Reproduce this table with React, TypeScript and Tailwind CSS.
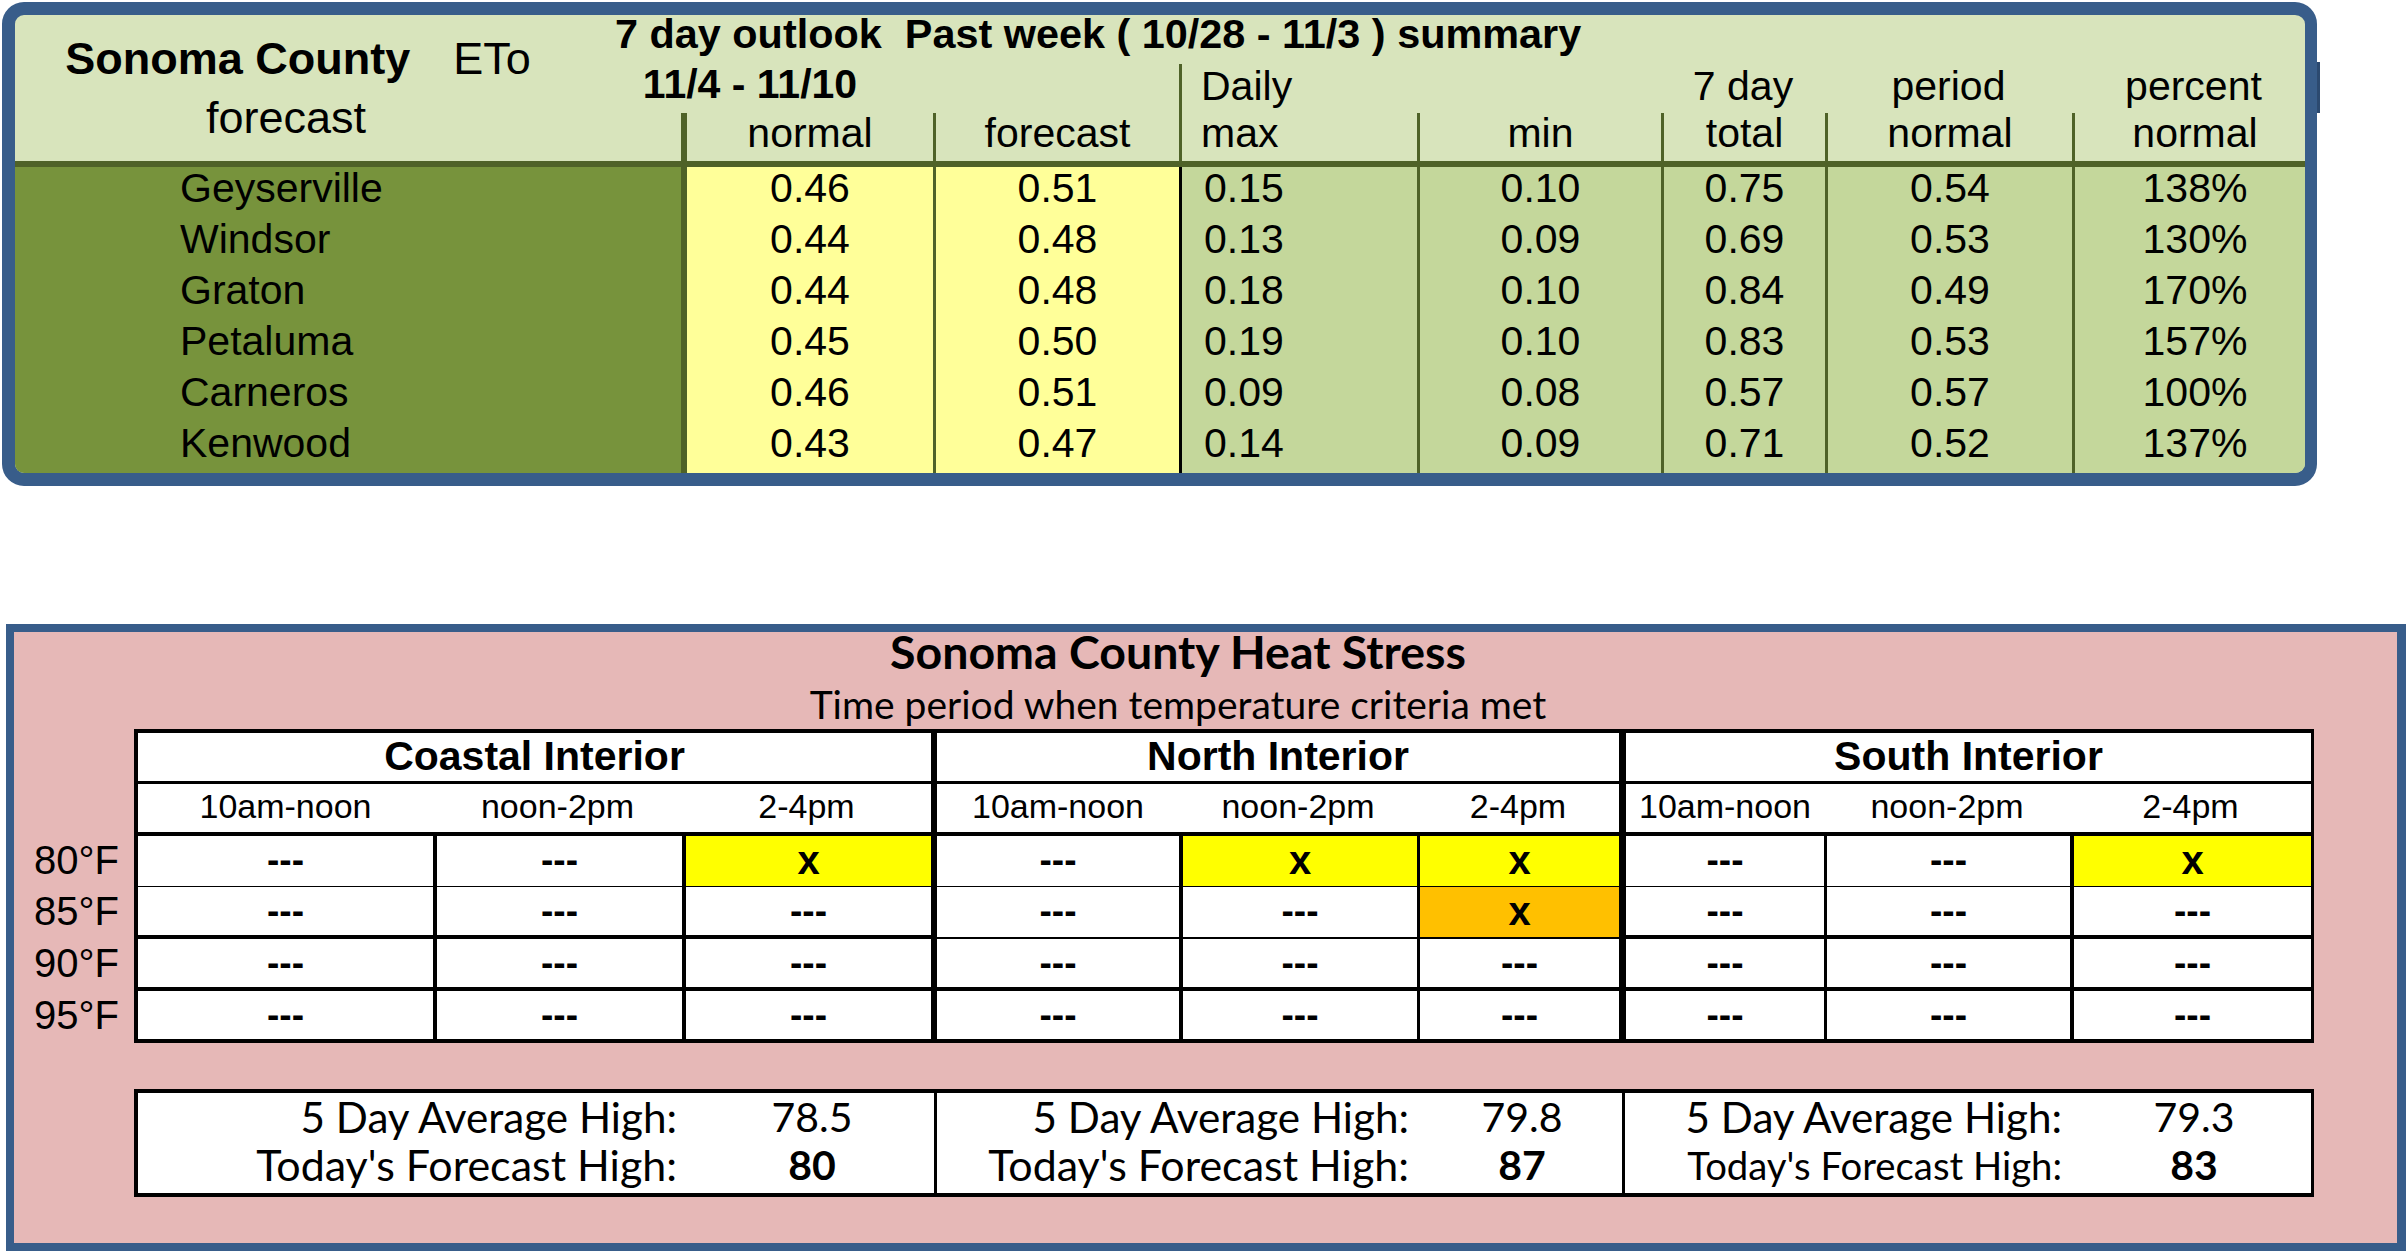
import React from 'react';

const eto = [
  ['Geyserville', '0.46', '0.51', '0.15', '0.10', '0.75', '0.54', '138%'],
  ['Windsor', '0.44', '0.48', '0.13', '0.09', '0.69', '0.53', '130%'],
  ['Graton', '0.44', '0.48', '0.18', '0.10', '0.84', '0.49', '170%'],
  ['Petaluma', '0.45', '0.50', '0.19', '0.10', '0.83', '0.53', '157%'],
  ['Carneros', '0.46', '0.51', '0.09', '0.08', '0.57', '0.57', '100%'],
  ['Kenwood', '0.43', '0.47', '0.14', '0.09', '0.71', '0.52', '137%'],
];

const etoCell = [
  'bg-[#77933c] pl-[165px]',
  'bg-[#ffff99] border-l-[6px] border-[#4f6228] text-center',
  'bg-[#ffff99] border-l-[3px] border-[#4f6228] text-center',
  'bg-[#c4d79b] border-l-[3px] border-black pl-[22px]',
  'bg-[#c4d79b] border-l-[3px] border-[#4f6228] text-center',
  'bg-[#c4d79b] border-l-[3px] border-[#4f6228] text-center',
  'bg-[#c4d79b] border-l-[3px] border-[#4f6228] text-center',
  'bg-[#c4d79b] border-l-[3px] border-[#4f6228] pl-[10px] text-center',
];

const temps = ['80°F', '85°F', '90°F', '95°F'];
const rowBox = ['h-[51px] border-b-[3px]', 'h-[52px] border-b-[4px]', 'h-[52px] border-b-[4px]', 'h-[48px]'];
const labelBox = ['h-[51px]', 'h-[52px]', 'h-[52px]', 'h-[48px]'];
const slots = ['10am-noon', 'noon-2pm', '2-4pm'];

const groups = [
  {
    name: 'Coastal Interior',
    wrap: 'w-[793px]',
    cols: 'grid-cols-[295px_249px_249px]',
    lines: ['', 'border-l-[4px]', 'border-l-[4px]'],
    rows: [['-', '-', 'y'], ['-', '-', '-'], ['-', '-', '-'], ['-', '-', '-']],
  },
  {
    name: 'North Interior',
    wrap: 'w-[688px] border-l-[6px]',
    cols: 'grid-cols-[242px_238px_202px]',
    lines: ['', 'border-l-[4px]', 'border-l-[3px]'],
    rows: [['-', 'y', 'y'], ['-', '-', 'o'], ['-', '-', '-'], ['-', '-', '-']],
  },
  {
    name: 'South Interior',
    wrap: 'w-[692px] border-l-[7px]',
    cols: 'grid-cols-[198px_246px_241px]',
    lines: ['', 'border-l-[3px]', 'border-l-[4px]'],
    rows: [['-', '-', 'y'], ['-', '-', '-'], ['-', '-', '-'], ['-', '-', '-']],
  },
];

const summary = [
  { wrap: 'w-[796px]', label: 'w-[539px]', value: 'w-[270px]', avg: '78.5', today: '80', small: false },
  { wrap: 'w-[688px] border-l-[3px]', label: 'w-[472px]', value: 'w-[226px]', avg: '79.8', today: '87', small: false },
  { wrap: 'w-[689px] border-l-[3px]', label: 'w-[437px]', value: 'w-[264px]', avg: '79.3', today: '83', small: true },
];

const EtoPanel: React.FC = () => (
  <div className="flex items-start pl-[2px] pt-[2px]">
    <div className="w-[2315px] overflow-hidden rounded-[22px] border-[13px] border-r-[12px] border-[#385d8a] bg-[#d8e4bc] font-['Liberation_Sans',Arial,sans-serif] text-black">
      <div className="grid h-[146px] grid-cols-[566px_100px_252px_246px_238px_244px_164px_247px_233px] grid-rows-[49px_49px_48px] text-[41px]">
        <div className="col-start-1 row-span-3 row-start-1 flex flex-col items-center justify-center text-[45px] leading-[59px]">
          <div className="whitespace-nowrap">
            <span className="font-bold">Sonoma County</span>
            <span className="ml-[43px]">ETo</span>
          </div>
          <div className="pr-[24px]">forecast</div>
        </div>
        <div className="col-span-8 col-start-2 row-start-1 whitespace-pre pl-[34px] text-[41.4px] font-bold leading-[38px]">
          {'7 day outlook  Past week ( 10/28 - 11/3 ) summary'}
        </div>
        <div className="col-span-2 col-start-2 row-start-2 pr-[14px] text-center font-bold leading-[40px]">11/4 - 11/10</div>
        <div className="col-start-5 row-start-2 border-l-[3px] border-[#4f6228] pl-[19px] leading-[44px]">Daily</div>
        <div className="col-start-7 row-start-2 text-center leading-[44px]">7 day</div>
        <div className="col-start-8 row-start-2 text-center leading-[44px]">period</div>
        <div className="col-start-9 row-start-2 pl-[10px] text-center leading-[44px]">percent</div>
        <div className="col-start-3 row-start-3 border-l-[6px] border-[#4f6228] text-center leading-[40px]">normal</div>
        <div className="col-start-4 row-start-3 border-l-[3px] border-[#4f6228] text-center leading-[40px]">forecast</div>
        <div className="col-start-5 row-start-3 border-l-[3px] border-[#4f6228] pl-[19px] leading-[40px]">max</div>
        <div className="col-start-6 row-start-3 border-l-[3px] border-[#4f6228] text-center leading-[40px]">min</div>
        <div className="col-start-7 row-start-3 border-l-[3px] border-[#4f6228] text-center leading-[40px]">total</div>
        <div className="col-start-8 row-start-3 border-l-[3px] border-[#4f6228] text-center leading-[40px]">normal</div>
        <div className="col-start-9 row-start-3 border-l-[3px] border-[#4f6228] pl-[10px] text-center leading-[40px]">normal</div>
      </div>
      <div className="h-[6px] bg-[#4f6228]" />
      <div className="grid grid-cols-[666px_252px_246px_238px_244px_164px_247px_233px] text-[41px] leading-[42px]">
        {eto.map((row) =>
          row.map((v, i) => (
            <div key={row[0] + i} className={`h-[51px] ${etoCell[i]}`}>
              {v}
            </div>
          )),
        )}
      </div>
    </div>
    <div className="mt-[60px] h-[51px] w-[3px] bg-[#2c4a70]" />
  </div>
);

const Mark: React.FC<{ v: string }> = ({ v }) =>
  v === '-' ? <span>---</span> : <span className="text-[40px]">x</span>;

const HeatPanel: React.FC = () => (
  <div className="ml-[6px] mt-[138px] h-[627px] w-[2400px] border-[8px] border-r-[9px] border-[#385d8a] bg-[#e6b8b7] text-black">
    <div className="w-[2328px] text-center font-['Lato',sans-serif]">
      <div className="text-[46.5px] font-bold leading-[38px]">Sonoma County Heat Stress</div>
      <div className="mt-[14px] text-[39px] leading-[40px]">Time period when temperature criteria met</div>
    </div>

    <div className="mt-[5px] flex font-['Liberation_Sans',Arial,sans-serif]">
      <div className="w-[120px] pt-[107px] pl-[20px] text-[40px] leading-[48px]">
        {temps.map((t, i) => (
          <div key={t} className={labelBox[i]}>
            {t}
          </div>
        ))}
      </div>
      <div className="flex w-[2180px] border-4 border-r-[3px] border-black bg-white">
        {groups.map((g) => (
          <div key={g.name} className={`flex flex-col border-black ${g.wrap}`}>
            <div className="h-[51px] border-b-[3px] border-black text-center text-[41px] font-bold leading-[46px]">{g.name}</div>
            <div className={`grid h-[52px] border-b-[4px] border-black text-[34px] leading-[45px] ${g.cols}`}>
              {slots.map((s) => (
                <div key={s} className="text-center">
                  {s}
                </div>
              ))}
            </div>
            {g.rows.map((r, ri) => (
              <div key={ri} className={`grid border-black ${rowBox[ri]} ${g.cols}`}>
                {r.map((v, ci) => (
                  <div
                    key={ci}
                    className={`border-black text-center text-[37px] font-bold leading-[48px] ${g.lines[ci]} ${
                      v === 'y' ? 'bg-[#ffff00]' : v === 'o' ? 'bg-[#ffc000]' : 'bg-white'
                    }`}
                  >
                    <Mark v={v} />
                  </div>
                ))}
              </div>
            ))}
          </div>
        ))}
      </div>
    </div>

    <div className="ml-[120px] mt-[46px] flex h-[108px] w-[2180px] border-4 border-r-[3px] border-black bg-white font-['Lato',sans-serif] text-[41px] leading-[48px]">
      {summary.map((s) => (
        <div key={s.avg} className={`flex shrink-0 flex-col border-black ${s.wrap}`}>
          <div className="flex">
            <span className={`shrink-0 text-right text-[42.2px] ${s.label}`}>5 Day Average High:</span>
            <span className={`shrink-0 text-center ${s.value}`}>{s.avg}</span>
          </div>
          <div className="flex">
            <span className={`shrink-0 text-right ${s.label} ${s.small ? 'text-[38.3px]' : 'text-[43px]'}`}>Today's Forecast High:</span>
            <span className={`shrink-0 text-center font-bold ${s.value}`}>{s.today}</span>
          </div>
        </div>
      ))}
    </div>
  </div>
);

export default function App() {
  return (
    <div className="h-[1251px] w-[2406px] overflow-hidden bg-white">
      <EtoPanel />
      <HeatPanel />
    </div>
  );
}
